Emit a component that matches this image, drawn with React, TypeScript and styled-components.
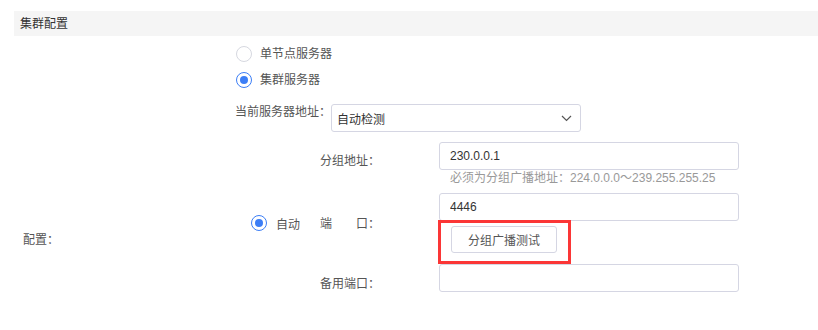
import React from "react"
import styled, { createGlobalStyle } from "styled-components"

const GlobalStyle = createGlobalStyle`
    html, body {
        margin: 0;
        background: #fff;
    }
    body {
        font-family: "Liberation Sans", "Noto Sans CJK SC", sans-serif;
        font-size: 12px;
        color: #555;
    }
`

const Page = styled.div`
    padding: 11px 0 0 14px;
`

const SectionTitle = styled.div`
    height: 25px;
    line-height: 26px;
    padding-left: 6px;
    background: #f5f5f5;
    color: #333;
    font-size: 12px;
`

const FormRow = styled.div`
    display: flex;
`

const RowLabel = styled.div`
    width: 222px;
    box-sizing: border-box;
    padding: 196px 0 0 9px;
    line-height: 16px;
    color: #555;
`

const RowBody = styled.div`
    display: flex;
    flex-direction: column;
    padding-top: 5px;
`

const RadioLine = styled.label`
    display: flex;
    align-items: center;
    gap: 8px;
    height: 26px;
    color: #555;
    line-height: 16px;
`

const RadioDot = styled.span<{ $checked?: boolean }>`
    width: 16px;
    height: 16px;
    flex: none;
    box-sizing: border-box;
    border-radius: 50%;
    border: 1.5px solid ${p => (p.$checked ? "#3c7ef6" : "#d6d8e0")};
    display: flex;
    align-items: center;
    justify-content: center;

    &::after {
        content: "";
        width: 8px;
        height: 8px;
        border-radius: 50%;
        background: ${p => (p.$checked ? "#3c7ef6" : "transparent")};
    }
`

const ServerRow = styled.div`
    display: flex;
    align-items: flex-start;
    margin: 11px 0 0 -1px;
`

const ServerLabel = styled.span`
    line-height: 16px;
    color: #555;
`

const Select = styled.div`
    width: 250px;
    height: 28px;
    box-sizing: border-box;
    border: 1px solid #d5d6e3;
    border-radius: 3px;
    padding: 0 8px 0 5px;
    display: flex;
    align-items: center;
    justify-content: space-between;
    color: #333;
`

const SubBlock = styled.div`
    display: flex;
    margin-top: 10px;
    padding-left: 15px;
`

const AutoRadio = styled(RadioLine)`
    width: 69px;
    align-self: center;
    margin-top: 12px;
    gap: 9px;
`

const AutoText = styled.span`
    margin-top: 3px;
`

const Fields = styled.div`
    display: flex;
    flex-direction: column;
`

const FieldRow = styled.div<{ $gap?: number }>`
    display: flex;
    margin-bottom: ${p => p.$gap ?? 0}px;
`

const FieldLabel = styled.div<{ $top: number }>`
    width: 119px;
    padding-top: ${p => p.$top}px;
    line-height: 16px;
    color: #555;
`

const FieldControl = styled.div`
    display: flex;
    flex-direction: column;
    width: 300px;
`

const TextInput = styled.input`
    width: 300px;
    height: 28px;
    box-sizing: border-box;
    border: 1px solid #d5d6e3;
    border-radius: 3px;
    padding: 0 10px;
    font: inherit;
    color: #333;
    outline: none;
`

const Hint = styled.div`
    padding-left: 11px;
    line-height: 16px;
    color: #999;
    white-space: nowrap;
`

const ButtonFrame = styled.div`
    align-self: flex-start;
    margin: -1px 0 0 -1px;
    border: 3px solid #fb3636;
    padding: 3px 11px 8px 10px;
`

const TestButton = styled.button`
    width: 106px;
    height: 27px;
    box-sizing: border-box;
    border: 1px solid #d5d6e3;
    border-radius: 3px;
    background: #fff;
    font: inherit;
    color: #555;
    padding: 0;
    display: block;
`

const Chevron = () => (
    <svg width="11" height="7" viewBox="0 0 11 7">
        <path d="M1 1l4.5 4.5L10 1" fill="none" stroke="#555" strokeWidth="1.2" />
    </svg>
)

export default function App() {
    return <>
        <GlobalStyle />
        <Page>
            <SectionTitle>集群配置</SectionTitle>
            <FormRow>
                <RowLabel>配置：</RowLabel>
                <RowBody>
                    <RadioLine><RadioDot />单节点服务器</RadioLine>
                    <RadioLine><RadioDot $checked />集群服务器</RadioLine>

                    <ServerRow>
                        <ServerLabel>当前服务器地址：</ServerLabel>
                        <Select>
                            <span>自动检测</span>
                            <Chevron />
                        </Select>
                    </ServerRow>

                    <SubBlock>
                        <AutoRadio><RadioDot $checked /><AutoText>自动</AutoText></AutoRadio>
                        <Fields>
                            <FieldRow $gap={7}>
                                <FieldLabel $top={11}>分组地址：</FieldLabel>
                                <FieldControl>
                                    <TextInput defaultValue="230.0.0.1" readOnly />
                                    <Hint>必须为分组广播地址：224.0.0.0～239.255.255.25</Hint>
                                </FieldControl>
                            </FieldRow>
                            <FieldRow>
                                <FieldLabel $top={23}>端&emsp;&emsp;口：</FieldLabel>
                                <FieldControl>
                                    <TextInput defaultValue="4446" readOnly />
                                    <ButtonFrame>
                                        <TestButton>分组广播测试</TestButton>
                                    </ButtonFrame>
                                </FieldControl>
                            </FieldRow>
                            <FieldRow>
                                <FieldLabel $top={12}>备用端口：</FieldLabel>
                                <FieldControl>
                                    <TextInput defaultValue="" readOnly />
                                </FieldControl>
                            </FieldRow>
                        </Fields>
                    </SubBlock>
                </RowBody>
            </FormRow>
        </Page>
    </>
}
